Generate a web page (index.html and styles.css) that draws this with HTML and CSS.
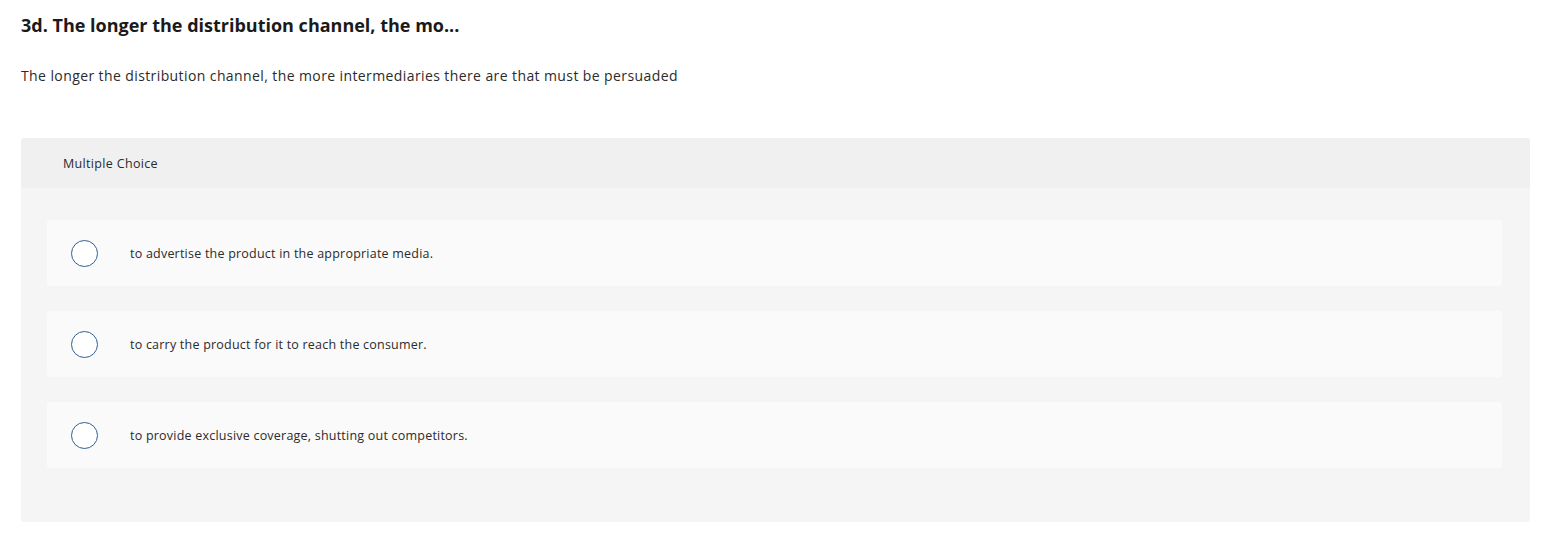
FILE: index.html
```html
<!DOCTYPE html>
<html>
<head>
<meta charset="utf-8">
<link rel="stylesheet" href="styles.css">
</head>
<body>
<div class="page">
  <h1 class="title">3d. The longer the distribution channel, the mo...</h1>
  <p class="prompt">The longer the distribution channel, the more intermediaries there are that must be persuaded</p>
  <div class="panel">
    <div class="panel-head">Multiple Choice</div>
    <div class="panel-body">
      <div class="option"><span class="radio"></span><span class="opt-text">to advertise the product in the appropriate media.</span></div>
      <div class="option"><span class="radio"></span><span class="opt-text">to carry the product for it to reach the consumer.</span></div>
      <div class="option"><span class="radio"></span><span class="opt-text">to provide exclusive coverage, shutting out competitors.</span></div>
    </div>
  </div>
</div>
</body>
</html>
```
FILE: styles.css
```css
html, body { margin: 0; padding: 0; background: #fff; }
body { font-family: "Open Sans", Lato, sans-serif; color: #1f1f1f; }
.page { padding: 14px 20px 0 21px; }
.title { margin: 0; font-size: 18px; font-weight: 700; line-height: 22px; color: #1a1a1a; }
.prompt { margin: 31px 0 0; font-size: 14px; line-height: 18px; color: #2b2b2b; letter-spacing: 0.4px; }
.panel { margin-top: 53px; background: #f5f5f5; border-radius: 3px; height: 384px; }
.panel-head { height: 50px; background: #f0f0f0; border-radius: 3px 3px 0 0; padding-left: 42px; display: flex; align-items: center; font-size: 12.5px; color: #2b2b2b; letter-spacing: 0.33px; }
.panel-body { padding: 32px 28px 0 26px; display: flex; flex-direction: column; gap: 25px; }
.option { height: 66px; background: #fafafa; border-radius: 3px; display: flex; align-items: center; padding-left: 24px; }
.radio { width: 25px; height: 25px; border: 1.5px solid #2f5f94; border-radius: 50%; flex: none; background: #fff; }
.opt-text { margin-left: 32px; font-size: 12.5px; color: #2b2b2b; letter-spacing: 0.22px; }
```
